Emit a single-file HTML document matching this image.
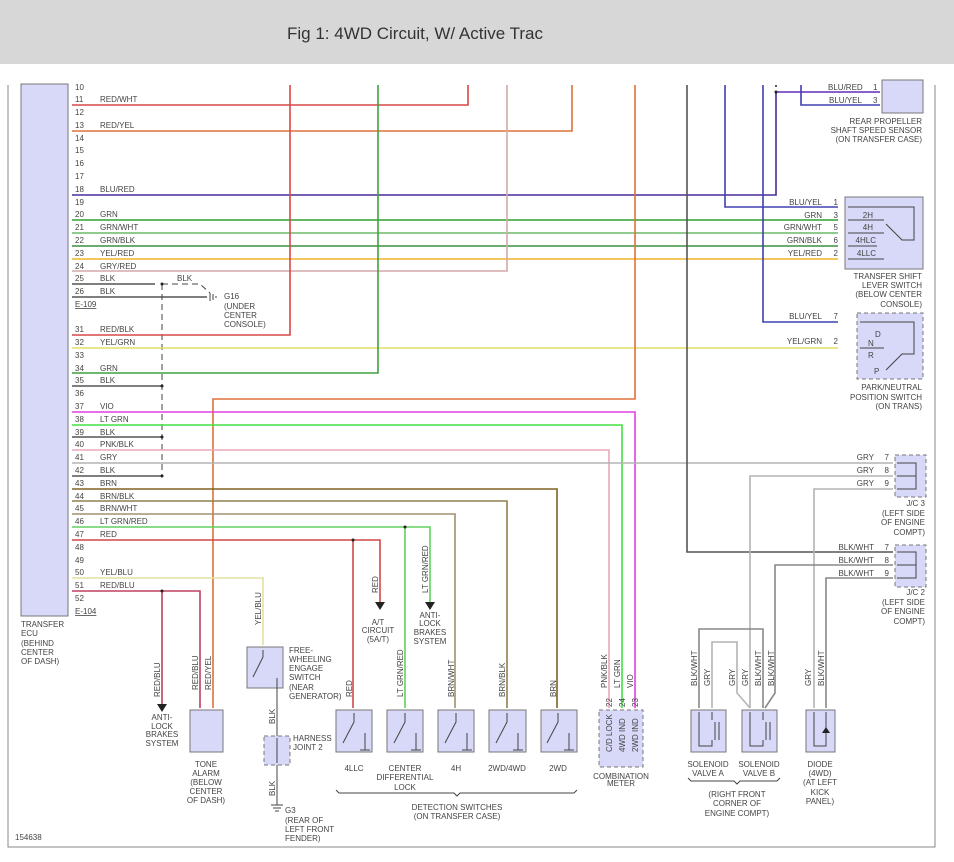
<!DOCTYPE html><html><head><meta charset="utf-8"><style>
body{margin:0;background:#fff;width:954px;height:862px;overflow:hidden}
svg{display:block}
text{font-family:"Liberation Sans",sans-serif;font-size:8px;fill:#444}
.h{font-size:17px;fill:#333}
.w{fill:none;stroke-width:1.6}
.b{fill:#d8d8f8;stroke:#777;stroke-width:1}
.d{fill:#d8d8f8;stroke:#777;stroke-width:1;stroke-dasharray:4 3}
.k{fill:none;stroke:#444;stroke-width:1}
</style></head><body>
<svg width="954" height="862" viewBox="0 0 954 862">
<rect x="0" y="0" width="954" height="64" fill="#d7d7d7"/>
<text class="h" x="287" y="39">Fig 1: 4WD Circuit, W/ Active Trac</text>
<path d="M8 85V847H935V85" fill="none" stroke="#888" stroke-width="1"/>
<rect class="b" x="21" y="84" width="47" height="532"/>
<g>
<text x="75" y="90">10</text><text x="75" y="102">11</text><text x="75" y="115">12</text><text x="75" y="128">13</text><text x="75" y="141">14</text><text x="75" y="153">15</text><text x="75" y="166">16</text><text x="75" y="179">17</text><text x="75" y="192">18</text><text x="75" y="205">19</text><text x="75" y="217">20</text><text x="75" y="230">21</text><text x="75" y="243">22</text><text x="75" y="256">23</text><text x="75" y="269">24</text><text x="75" y="281">25</text><text x="75" y="294">26</text>
<text x="75" y="307" text-decoration="underline">E-109</text>
<text x="75" y="332">31</text><text x="75" y="345">32</text><text x="75" y="358">33</text><text x="75" y="371">34</text><text x="75" y="383">35</text><text x="75" y="396">36</text><text x="75" y="409">37</text><text x="75" y="422">38</text><text x="75" y="435">39</text><text x="75" y="447">40</text><text x="75" y="460">41</text><text x="75" y="473">42</text><text x="75" y="486">43</text><text x="75" y="499">44</text><text x="75" y="511">45</text><text x="75" y="524">46</text><text x="75" y="537">47</text><text x="75" y="550">48</text><text x="75" y="563">49</text><text x="75" y="575">50</text><text x="75" y="588">51</text><text x="75" y="601">52</text>
<text x="75" y="614" text-decoration="underline">E-104</text>
<text x="100" y="102">RED/WHT</text><text x="100" y="128">RED/YEL</text><text x="100" y="192">BLU/RED</text><text x="100" y="217">GRN</text><text x="100" y="230">GRN/WHT</text><text x="100" y="243">GRN/BLK</text><text x="100" y="256">YEL/RED</text><text x="100" y="269">GRY/RED</text><text x="100" y="281">BLK</text><text x="100" y="294">BLK</text>
<text x="100" y="332">RED/BLK</text><text x="100" y="345">YEL/GRN</text><text x="100" y="371">GRN</text><text x="100" y="383">BLK</text><text x="100" y="409">VIO</text><text x="100" y="422">LT GRN</text><text x="100" y="435">BLK</text><text x="100" y="447">PNK/BLK</text><text x="100" y="460">GRY</text><text x="100" y="473">BLK</text><text x="100" y="486">BRN</text><text x="100" y="499">BRN/BLK</text><text x="100" y="511">BRN/WHT</text><text x="100" y="524">LT GRN/RED</text><text x="100" y="537">RED</text><text x="100" y="575">YEL/BLU</text><text x="100" y="588">RED/BLU</text>
<text x="177" y="281">BLK</text>
</g>
<path class="w" stroke="#d84848" d="M72 105H468V85"/>
<path class="w" stroke="#e0703a" d="M72 131H572V85"/>
<path class="w" stroke="#4a2a9a" d="M72 195H776V92H880"/>
<path class="w" stroke="#8050c8" d="M776 92H880"/>
<path class="w" stroke="#30a030" d="M72 220H838"/>
<path class="w" stroke="#6ab86a" d="M72 233H838"/>
<path class="w" stroke="#3f8f3f" d="M72 246H838"/>
<path class="w" stroke="#f0b428" d="M72 259H838"/>
<path class="w" stroke="#d4a8a8" d="M72 271H507V85"/>
<path class="w" stroke="#555" d="M72 284H155M72 297H207"/>
<path class="k" stroke-dasharray="6 4" d="M162 284H200L210 293"/>
<path class="k" stroke-dasharray="6 4" stroke="#999" d="M162 284V476"/>
<path class="k" d="M210 293V301M213 294V300M216 296V298"/>
<text x="224" y="299">G16</text><text x="224" y="309">(UNDER</text><text x="224" y="318">CENTER</text><text x="224" y="327">CONSOLE)</text>
<path class="w" stroke="#d84848" d="M72 335H290V85"/>
<path class="w" stroke="#e0e060" d="M72 348H838"/>
<path class="w" stroke="#40a040" d="M72 373H378V85"/>
<path class="w" stroke="#555" d="M72 386H162M72 437H162M72 476H162"/>
<path class="w" stroke="#e0703a" d="M213 708V399H635V85"/>
<path class="w" stroke="#e040e0" d="M72 412H635V708"/>
<path class="w" stroke="#44e044" d="M72 425H622V708"/>
<path class="w" stroke="#e8a8b8" d="M72 450H609V708"/>
<path class="w" stroke="#b4b4b4" d="M72 463H893"/>
<path class="w" stroke="#806020" d="M72 489H557V708"/>
<path class="w" stroke="#908050" d="M72 501H507V708"/>
<path class="w" stroke="#a09070" d="M72 514H455V708"/>
<path class="w" stroke="#60d060" d="M72 527H405V708M405 527H430V603"/>
<path class="w" stroke="#d04848" d="M72 540H353V708M353 540H380V603"/>
<path class="w" stroke="#e4e0a0" d="M72 578H263V645"/>
<path class="w" stroke="#c04060" d="M72 591H162V705M162 591H200V708"/>
<g fill="#222"><circle cx="162" cy="284" r="1.5"/><circle cx="162" cy="386" r="1.5"/><circle cx="162" cy="437" r="1.5"/><circle cx="162" cy="476" r="1.5"/><circle cx="162" cy="591" r="1.5"/><circle cx="405" cy="527" r="1.5"/><circle cx="353" cy="540" r="1.5"/><circle cx="776" cy="92" r="1.5"/><circle cx="776" cy="86" r="1"/>
<path d="M157 704H167L162 712Z"/><path d="M375 602H385L380 610Z"/><path d="M425 602H435L430 610Z"/></g>
<path class="w" stroke="#555" stroke-width="1.2" d="M687 85V552H893"/>
<path class="w" stroke="#4040b0" stroke-width="1.3" d="M725 85V207H838M763 85V322H838M801 85V105H880"/>
<path class="w" stroke="#b4b4b4" d="M893 476H750V708M893 489H814V708M712 708V642H737V693L750 708"/>
<path class="w" stroke="#888" d="M893 565H775V693L765 708M893 578H826V708M699 708V629H763V708"/>
<rect class="b" x="882" y="80" width="41" height="33"/>
<text x="828" y="90">BLU/RED</text><text x="873" y="90">1</text><text x="829" y="103">BLU/YEL</text><text x="873" y="103">3</text>
<g text-anchor="end"><text x="922" y="124">REAR PROPELLER</text><text x="922" y="133">SHAFT SPEED SENSOR</text><text x="922" y="142">(ON TRANSFER CASE)</text></g>
<rect class="b" x="845" y="197" width="78" height="72"/>
<g text-anchor="end"><text x="822" y="205">BLU/YEL</text><text x="822" y="218">GRN</text><text x="822" y="230">GRN/WHT</text><text x="822" y="243">GRN/BLK</text><text x="822" y="256">YEL/RED</text>
<text x="838" y="205">1</text><text x="838" y="218">3</text><text x="838" y="230">5</text><text x="838" y="243">6</text><text x="838" y="256">2</text>
<text x="873" y="218">2H</text><text x="873" y="230">4H</text><text x="876" y="243">4HLC</text><text x="876" y="256">4LLC</text>
<text x="922" y="279">TRANSFER SHIFT</text><text x="922" y="288">LEVER SWITCH</text><text x="922" y="297">(BELOW CENTER</text><text x="922" y="307">CONSOLE)</text>
<text x="822" y="319">BLU/YEL</text><text x="838" y="319">7</text><text x="822" y="344">YEL/GRN</text><text x="838" y="344">2</text>
<text x="922" y="390">PARK/NEUTRAL</text><text x="922" y="400">POSITION SWITCH</text><text x="922" y="409">(ON TRANS)</text>
<text x="874" y="460">GRY</text><text x="874" y="473">GRY</text><text x="874" y="486">GRY</text><text x="889" y="460">7</text><text x="889" y="473">8</text><text x="889" y="486">9</text>
<text x="925" y="506">J/C 3</text><text x="925" y="516">(LEFT SIDE</text><text x="925" y="525">OF ENGINE</text><text x="925" y="535">COMPT)</text>
<text x="874" y="550">BLK/WHT</text><text x="874" y="563">BLK/WHT</text><text x="874" y="576">BLK/WHT</text><text x="889" y="550">7</text><text x="889" y="563">8</text><text x="889" y="576">9</text>
<text x="925" y="595">J/C 2</text><text x="925" y="605">(LEFT SIDE</text><text x="925" y="614">OF ENGINE</text><text x="925" y="624">COMPT)</text></g>
<path class="k" d="M848 207H914V240H902L886 224M848 220H884M848 233H884M848 246H877M848 259H884"/>
<rect class="d" x="857" y="313" width="66" height="66"/>
<path class="k" d="M860 322H914V354H902L886 370M860 348H884"/>
<text x="875" y="337">D</text><text x="868" y="346">N</text><text x="868" y="358">R</text><text x="874" y="374">P</text>
<rect class="d" x="895" y="455" width="31" height="42"/>
<path class="k" d="M897 463H916V489H897M897 476H916"/>
<rect class="d" x="895" y="545" width="31" height="42"/>
<path class="k" d="M897 552H916V578H897M897 565H916"/>
<text x="21" y="627">TRANSFER</text><text x="21" y="636">ECU</text><text x="21" y="646">(BEHIND</text><text x="21" y="655">CENTER</text><text x="21" y="664">OF DASH)</text>
<g text-anchor="middle">
<text x="162" y="720">ANTI-</text><text x="162" y="729">LOCK</text><text x="162" y="737">BRAKES</text><text x="162" y="746">SYSTEM</text>
<text x="206" y="767">TONE</text><text x="206" y="776">ALARM</text><text x="206" y="785">(BELOW</text><text x="206" y="794">CENTER</text><text x="206" y="803">OF DASH)</text>
<text x="378" y="625">A/T</text><text x="378" y="633">CIRCUIT</text><text x="378" y="642">(5A/T)</text>
<text x="430" y="618">ANTI-</text><text x="430" y="626">LOCK</text><text x="430" y="635">BRAKES</text><text x="430" y="644">SYSTEM</text>
<text x="354" y="771">4LLC</text><text x="405" y="771">CENTER</text><text x="405" y="780">DIFFERENTIAL</text><text x="405" y="790">LOCK</text><text x="456" y="771">4H</text><text x="507" y="771">2WD/4WD</text><text x="558" y="771">2WD</text>
<text x="457" y="810">DETECTION SWITCHES</text><text x="457" y="819">(ON TRANSFER CASE)</text>
<text x="621" y="779">COMBINATION</text><text x="621" y="786">METER</text>
<text x="708" y="767">SOLENOID</text><text x="708" y="776">VALVE A</text><text x="759" y="767">SOLENOID</text><text x="759" y="776">VALVE B</text>
<text x="737" y="797">(RIGHT FRONT</text><text x="737" y="806">CORNER OF</text><text x="737" y="816">ENGINE COMPT)</text>
<text x="820" y="767">DIODE</text><text x="820" y="776">(4WD)</text><text x="820" y="785">(AT LEFT</text><text x="820" y="795">KICK</text><text x="820" y="804">PANEL)</text>
</g>
<text x="289" y="653">FREE-</text><text x="289" y="662">WHEELING</text><text x="289" y="671">ENGAGE</text><text x="289" y="680">SWITCH</text><text x="289" y="690">(NEAR</text><text x="289" y="699">GENERATOR)</text>
<text x="293" y="741">HARNESS</text><text x="293" y="750">JOINT 2</text>
<text x="285" y="813">G3</text><text x="285" y="823">(REAR OF</text><text x="285" y="832">LEFT FRONT</text><text x="285" y="841">FENDER)</text>
<text x="15" y="840">154638</text>
<path class="k" d="M336 790l3 3H454l3 3 3-3H574l3-3M688 778l3 3H734l3 3 3-3H777l3-3"/>
<g>
<text transform="translate(160 697) rotate(-90)">RED/BLU</text>
<text transform="translate(198 690) rotate(-90)">RED/BLU</text>
<text transform="translate(211 690) rotate(-90)">RED/YEL</text>
<text transform="translate(261 625) rotate(-90)">YEL/BLU</text>
<text transform="translate(275 724) rotate(-90)">BLK</text>
<text transform="translate(275 796) rotate(-90)">BLK</text>
<text transform="translate(352 697) rotate(-90)">RED</text>
<text transform="translate(378 593) rotate(-90)">RED</text>
<text transform="translate(403 697) rotate(-90)">LT GRN/RED</text>
<text transform="translate(428 593) rotate(-90)">LT GRN/RED</text>
<text transform="translate(454 697) rotate(-90)">BRN/WHT</text>
<text transform="translate(505 697) rotate(-90)">BRN/BLK</text>
<text transform="translate(556 697) rotate(-90)">BRN</text>
<text transform="translate(607 688) rotate(-90)">PNK/BLK</text>
<text transform="translate(620 688) rotate(-90)">LT GRN</text>
<text transform="translate(633 688) rotate(-90)">VIO</text>
<text transform="translate(612 707) rotate(-90)">22</text><text transform="translate(625 707) rotate(-90)">24</text><text transform="translate(638 707) rotate(-90)">23</text>
<text transform="translate(697 686) rotate(-90)">BLK/WHT</text>
<text transform="translate(710 686) rotate(-90)">GRY</text>
<text transform="translate(735 686) rotate(-90)">GRY</text>
<text transform="translate(748 686) rotate(-90)">GRY</text>
<text transform="translate(761 686) rotate(-90)">BLK/WHT</text>
<text transform="translate(774 686) rotate(-90)">BLK/WHT</text>
<text transform="translate(811 686) rotate(-90)">GRY</text>
<text transform="translate(824 686) rotate(-90)">BLK/WHT</text>
</g>
<rect class="b" x="190" y="710" width="33" height="42"/>
<rect class="b" x="247" y="647" width="36" height="41"/>
<path class="k" d="M263 650V657L253 677M277 678V692M277 692V736M277 765V805M271 805H283M273 808H281M275 811H279"/>
<rect class="d" x="264" y="736" width="26" height="29"/>
<path class="k" d="M277 738V763"/>
<g>
<rect class="b" x="336" y="710" width="36" height="42"/><path class="k" d="M354 713V722L343 743M365 733V750M360 750H370"/>
<rect class="b" x="387" y="710" width="36" height="42"/><path class="k" d="M405 713V722L394 743M416 733V750M411 750H421"/>
<rect class="b" x="438" y="710" width="36" height="42"/><path class="k" d="M456 713V722L445 743M467 733V750M462 750H472"/>
<rect class="b" x="489" y="710" width="37" height="42"/><path class="k" d="M507 713V722L496 743M518 733V750M513 750H523"/>
<rect class="b" x="541" y="710" width="36" height="42"/><path class="k" d="M558 713V722L547 743M569 733V750M564 750H574"/>
</g>
<rect class="d" x="599" y="710" width="44" height="57"/>
<text transform="translate(612 752) rotate(-90)">C/D LOCK</text>
<text transform="translate(625 752) rotate(-90)">4WD IND</text>
<text transform="translate(638 752) rotate(-90)">2WD IND</text>
<rect class="b" x="691" y="710" width="35" height="42"/><path class="k" d="M699 712V746H712V740M712 712V720M715 722V740M719 722V740"/>
<rect class="b" x="742" y="710" width="35" height="42"/><path class="k" d="M750 712V746H763V740M763 712V720M766 722V740M770 722V740"/>
<rect class="b" x="806" y="710" width="29" height="42"/><path class="k" d="M814 712V746H826V712"/><path d="M822 733H830L826 727Z" fill="#222"/>
</svg>
</body></html>
